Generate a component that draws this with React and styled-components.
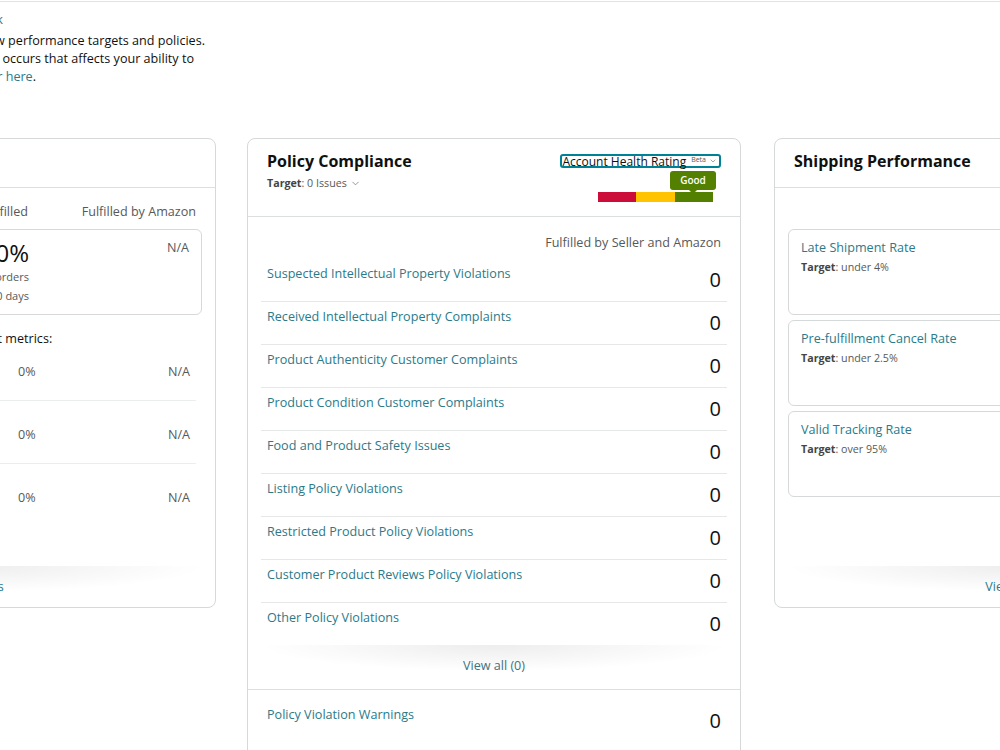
import React from "react";
import styled, { createGlobalStyle, css } from "styled-components";
import { ChevronDown } from "lucide-react";

const LINK = "#2a7a89";
const MUTED = "#565959";
const INK = "#0f1111";
const TEXT = "12.6px";

const GlobalStyle = createGlobalStyle`
  body {
    margin: 0;
    background: #fff;
    color: ${INK};
    font-family: "Open Sans", "Noto Sans", Arial, sans-serif;
    overflow: hidden;
  }
`;

const Page = styled.div`
  width: 1550px;
  margin-left: -278px;
  margin-top: 1px;
  border-top: 1px solid #e3e3e3;
`;

const Intro = styled.div`
  height: 136px;
  box-sizing: border-box;
  padding: 9px 0 0 20px;
  font-size: ${TEXT};
  line-height: 18px;
  a {
    color: ${LINK};
    text-decoration: none;
  }
`;

/* each line ends where the reference's wrap ends it */
const IntroLine = styled.div`
  width: ${(p) => p.$end}px;
  white-space: nowrap;
  text-align: right;
  ${(p) =>
    p.$gap &&
    css`
      margin-top: ${p.$gap}px;
    `}
`;

const CardRow = styled.div`
  display: grid;
  grid-template-columns: 494px 494px 494px;
  column-gap: 31px;
  align-items: start;
`;

const Card = styled.section`
  box-sizing: border-box;
  border: 1px solid #d5d9d9;
  border-radius: 8px;
  background: #fff;
  display: flex;
  flex-direction: column;
  overflow: hidden;
  ${(p) =>
    p.$short &&
    css`
      height: 470px;
    `}
  ${(p) =>
    p.$shift &&
    css`
      margin-left: ${p.$shift}px;
    `}
`;

const CardHeader = styled.header`
  display: flex;
  justify-content: space-between;
  align-items: flex-start;
  padding: 10px 19px 14px;
  border-bottom: 1px solid #dcdfdf;
`;

const Title = styled.h2`
  margin: 0;
  font-size: 16px;
  font-weight: 700;
  line-height: 24px;
  color: ${INK};
`;

const Target = styled.div`
  display: flex;
  align-items: center;
  gap: 3px;
  margin-top: 2px;
  font-size: 10.7px;
  line-height: 16px;
  color: ${MUTED};
  b {
    font-weight: 700;
    color: #444;
  }
  svg {
    color: #8a8f8f;
  }
`;

const RatingCol = styled.div`
  display: flex;
  flex-direction: column;
  align-items: flex-end;
  margin-top: 5px;
`;

const RatingButton = styled.button`
  display: flex;
  align-items: flex-start;
  gap: 3px;
  height: 14px;
  padding: 0 2px 0 0;
  border: 2px solid #008296;
  border-radius: 3px;
  background: #fff;
  font-family: inherit;
  font-size: 12px;
  line-height: 11px;
  color: ${INK};
  sup {
    font-size: 7px;
    line-height: 7px;
    color: ${MUTED};
    margin-left: 2px;
  }
  svg {
    color: #777;
    margin-top: 1px;
  }
`;

const Meter = styled.div`
  width: 115px;
  margin-right: 8px;
  display: flex;
  flex-direction: column;
  align-items: flex-end;
`;

const Badge = styled.div`
  position: relative;
  width: 46px;
  height: 19px;
  margin: 3px -3px 2px 0;
  border-radius: 3px;
  background: #538000;
  color: #fff;
  font-size: 10px;
  font-weight: 600;
  line-height: 19px;
  text-align: center;
  &::after {
    content: "";
    position: absolute;
    left: 50%;
    bottom: -4px;
    margin-left: -4px;
    border: 4px solid transparent;
    border-bottom: 0;
    border-top-color: #538000;
  }
`;

const Bar = styled.div`
  display: grid;
  grid-template-columns: repeat(3, 1fr);
  width: 115px;
  height: 10px;
`;

const Segment = styled.span`
  background: ${(p) => p.$color};
`;

const Body = styled.div`
  padding: 0 13px;
  flex: 1;
  ${(p) =>
    p.$top &&
    css`
      padding-top: ${p.$top}px;
    `}
`;

const ColHead = styled.div`
  padding: 17px 6px 7px;
  text-align: right;
  font-size: ${TEXT};
  line-height: 18px;
  color: ${MUTED};
`;

const IssueRow = styled.div`
  display: flex;
  justify-content: space-between;
  align-items: flex-start;
  height: 43px;
  box-sizing: border-box;
  padding: 6px 6px 0;
  border-bottom: 1px solid #e6e8e8;
  &:last-child {
    border-bottom: 0;
    height: 42px;
  }
`;

const IssueLabel = styled.a`
  font-size: ${TEXT};
  line-height: 18px;
  color: ${LINK};
  text-decoration: none;
`;

const Count = styled.span`
  margin-top: 3px;
  font-size: 20px;
  line-height: 24px;
  color: ${INK};
`;

const ViewAll = styled.div`
  padding: 12px 0 14px;
  text-align: center;
  font-size: ${TEXT};
  line-height: 18px;
  color: #3d7380;
  background: radial-gradient(ellipse 48% 26px at 50% 0, rgba(0, 0, 0, 0.07), rgba(0, 0, 0, 0));
  ${(p) =>
    p.$ruled &&
    css`
      border-bottom: 1px solid #dcdfdf;
    `}
`;

const CardFooter = styled(ViewAll)`
  height: 41px;
  box-sizing: border-box;
  padding: 0;
  display: flex;
  align-items: center;
  justify-content: center;
  color: ${LINK};
`;

const Warnings = styled.div`
  padding: 10px 13px 40px;
`;

const ValueHeads = styled.div`
  display: grid;
  grid-template-columns: 1fr auto 150px;
  column-gap: 18px;
  padding: 15px 6px 0;
  font-size: ${TEXT};
  line-height: 18px;
  color: ${MUTED};
  text-align: right;
`;

const RateBox = styled.div`
  display: grid;
  grid-template-columns: 1fr auto 147px;
  column-gap: 13px;
  margin-top: 8px;
  padding: 9px 12px;
  border: 1px solid #d5d9d9;
  border-radius: 6px;
`;

const RateName = styled.div`
  font-size: ${TEXT};
  line-height: 18px;
  color: ${LINK};
`;

const BigValue = styled.div`
  text-align: right;
  font-size: 24px;
  line-height: 28px;
  color: ${INK};
`;

const SmallNote = styled.div`
  text-align: right;
  font-size: 11px;
  line-height: 19px;
  color: ${MUTED};
`;

const NA = styled.div`
  text-align: right;
  font-size: ${TEXT};
  line-height: 18px;
  color: ${MUTED};
`;

const MetricsNote = styled.div`
  margin-top: 15px;
  padding-left: 6px;
  font-size: ${TEXT};
  line-height: 18px;
  color: ${INK};
`;

const MetricRows = styled.div`
  margin: 0 6px;
`;

const MetricRow = styled.div`
  display: grid;
  grid-template-columns: 1fr 36px 136px;
  padding: ${(p) => (p.$first ? 15 : 25)}px 6px 19px;
  border-bottom: 1px solid #eceeee;
  font-size: ${TEXT};
  line-height: 18px;
  color: ${MUTED};
  &:last-child {
    border-bottom: 0;
  }
`;

const MetricName = styled.span`
  color: ${LINK};
`;

const RightCell = styled.span`
  text-align: right;
`;

const MetricCard = styled.div`
  height: 86px;
  box-sizing: border-box;
  padding: 9px 12px;
  border: 1px solid #d5d9d9;
  border-radius: 6px;
  & + & {
    margin-top: 5px;
  }
`;

const MetricTitle = styled.div`
  font-size: ${TEXT};
  line-height: 18px;
  color: ${LINK};
`;

const issues = [
  "Suspected Intellectual Property Violations",
  "Received Intellectual Property Complaints",
  "Product Authenticity Customer Complaints",
  "Product Condition Customer Complaints",
  "Food and Product Safety Issues",
  "Listing Policy Violations",
  "Restricted Product Policy Violations",
  "Customer Product Reviews Policy Violations",
  "Other Policy Violations",
];

const odrMetrics = ["Negative Feedback", "A-to-z Guarantee Claims", "Chargeback Claims"];

const shipping = [
  ["Late Shipment Rate", "under 4%"],
  ["Pre-fulfillment Cancel Rate", "under 2.5%"],
  ["Valid Tracking Rate", "over 95%"],
];

function CustomerServiceCard() {
  return (
    <Card $short>
      <CardHeader>
        <Title>Customer Service Performance</Title>
      </CardHeader>
      <Body>
        <ValueHeads>
          <span />
          <span>Seller Fulfilled</span>
          <span>Fulfilled by Amazon</span>
        </ValueHeads>
        <RateBox>
          <div>
            <RateName>Order Defect Rate</RateName>
            <Target>
              <span>
                <b>Target</b>: under 1%
              </span>
            </Target>
          </div>
          <div>
            <BigValue>0%</BigValue>
            <SmallNote>0 of 0 orders</SmallNote>
            <SmallNote>60 days</SmallNote>
          </div>
          <NA>N/A</NA>
        </RateBox>
        <MetricsNote>Order Defect Rate consists of three different metrics:</MetricsNote>
        <MetricRows>
          {odrMetrics.map((m, i) => (
            <MetricRow key={m} $first={i === 0}>
              <MetricName>{m}</MetricName>
              <span>0%</span>
              <RightCell>N/A</RightCell>
            </MetricRow>
          ))}
        </MetricRows>
      </Body>
      <CardFooter>View details</CardFooter>
    </Card>
  );
}

function PolicyCard() {
  return (
    <Card>
      <CardHeader>
        <div>
          <Title>Policy Compliance</Title>
          <Target>
            <span>
              <b>Target</b>: 0 Issues
            </span>
            <ChevronDown size={11} strokeWidth={2} />
          </Target>
        </div>
        <RatingCol>
          <RatingButton>
            Account Health Rating
            <sup>Beta</sup>
            <ChevronDown size={8} strokeWidth={2} />
          </RatingButton>
          <Meter>
            <Badge>Good</Badge>
            <Bar>
              <Segment $color="#cc0c39" />
              <Segment $color="#ffc300" />
              <Segment $color="#538000" />
            </Bar>
          </Meter>
        </RatingCol>
      </CardHeader>
      <Body>
        <ColHead>Fulfilled by Seller and Amazon</ColHead>
        {issues.map((label) => (
          <IssueRow key={label}>
            <IssueLabel>{label}</IssueLabel>
            <Count>0</Count>
          </IssueRow>
        ))}
      </Body>
      <ViewAll $ruled>View all (0)</ViewAll>
      <Warnings>
        <IssueRow>
          <IssueLabel>Policy Violation Warnings</IssueLabel>
          <Count>0</Count>
        </IssueRow>
      </Warnings>
    </Card>
  );
}

function ShippingCard() {
  return (
    <Card $short $shift={2}>
      <CardHeader>
        <Title>Shipping Performance</Title>
      </CardHeader>
      <Body $top={41}>
        {shipping.map(([name, goal]) => (
          <MetricCard key={name}>
            <MetricTitle>{name}</MetricTitle>
            <Target>
              <span>
                <b>Target</b>: {goal}
              </span>
            </Target>
          </MetricCard>
        ))}
      </Body>
      <CardFooter>View details</CardFooter>
    </Card>
  );
}

export default function App() {
  return (
    <>
      <GlobalStyle />
      <Page>
        <Intro>
          <IntroLine $end={261}>
            <a>Give feedback</a>
          </IntroLine>
          <IntroLine $end={463} $gap={3}>
            how you are adhering to our new performance targets and policies.
          </IntroLine>
          <IntroLine $end={452}>
            required to sell. If a problem occurs that affects your ability to
          </IntroLine>
          <IntroLine $end={294}>
            sell, contact <a>your account manager here</a>.
          </IntroLine>
        </Intro>
        <CardRow>
          <CustomerServiceCard />
          <PolicyCard />
          <ShippingCard />
        </CardRow>
      </Page>
    </>
  );
}
